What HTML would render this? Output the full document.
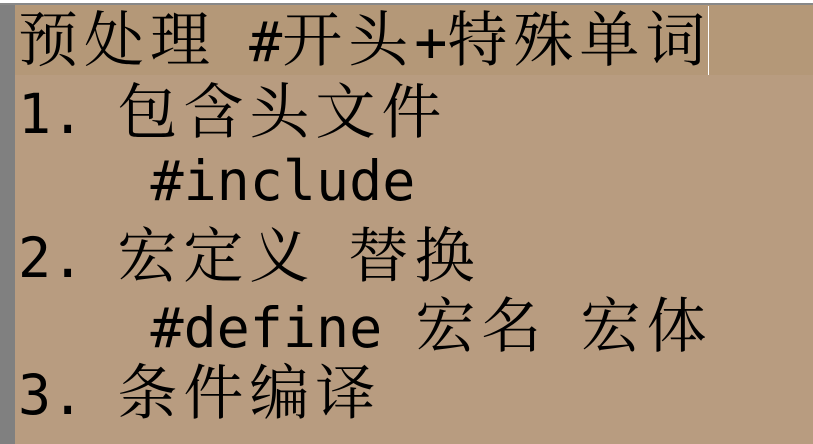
<!DOCTYPE html>
<html><head><meta charset="utf-8"><style>
html,body{margin:0;padding:0;width:813px;height:444px;overflow:hidden;background:#b89c80;}
.top{position:absolute;left:0;top:0;width:813px;height:5px;background:#fff;border-bottom:2px solid #888;box-sizing:border-box;}
.side{position:absolute;left:0;top:5px;width:15px;height:439px;background:#808080;}
.hl{position:absolute;left:15px;top:5px;width:798px;height:70px;background:#b49878;}
.cur{position:absolute;left:708px;top:6px;width:1px;height:69px;background:#fff;}
.l{position:absolute;left:18px;height:70px;line-height:70px;font-size:55px;white-space:pre;color:#000;
font-family:"DejaVu Sans Mono","Liberation Mono","Noto Serif CJK SC",monospace;}
.c{font-family:"Noto Serif CJK SC","Noto Sans CJK SC",serif;font-size:60px;letter-spacing:6px;line-height:70px;}
</style></head><body>
<div class="top"></div><div class="side"></div><div class="hl"></div><div class="cur"></div>
<div class="l" style="top:1px"><span class="c">预处理</span> #<span class="c">开头</span>+<span class="c">特殊单词</span></div>
<div class="l" style="top:73px">1. <span class="c">包含头文件</span></div>
<div class="l" style="top:146px">    #include</div>
<div class="l" style="top:217px">2. <span class="c">宏定义</span> <span class="c">替换</span></div>
<div class="l" style="top:287px">    #define <span class="c">宏名</span> <span class="c">宏体</span></div>
<div class="l" style="top:354px">3. <span class="c">条件编译</span></div>
</body></html>
